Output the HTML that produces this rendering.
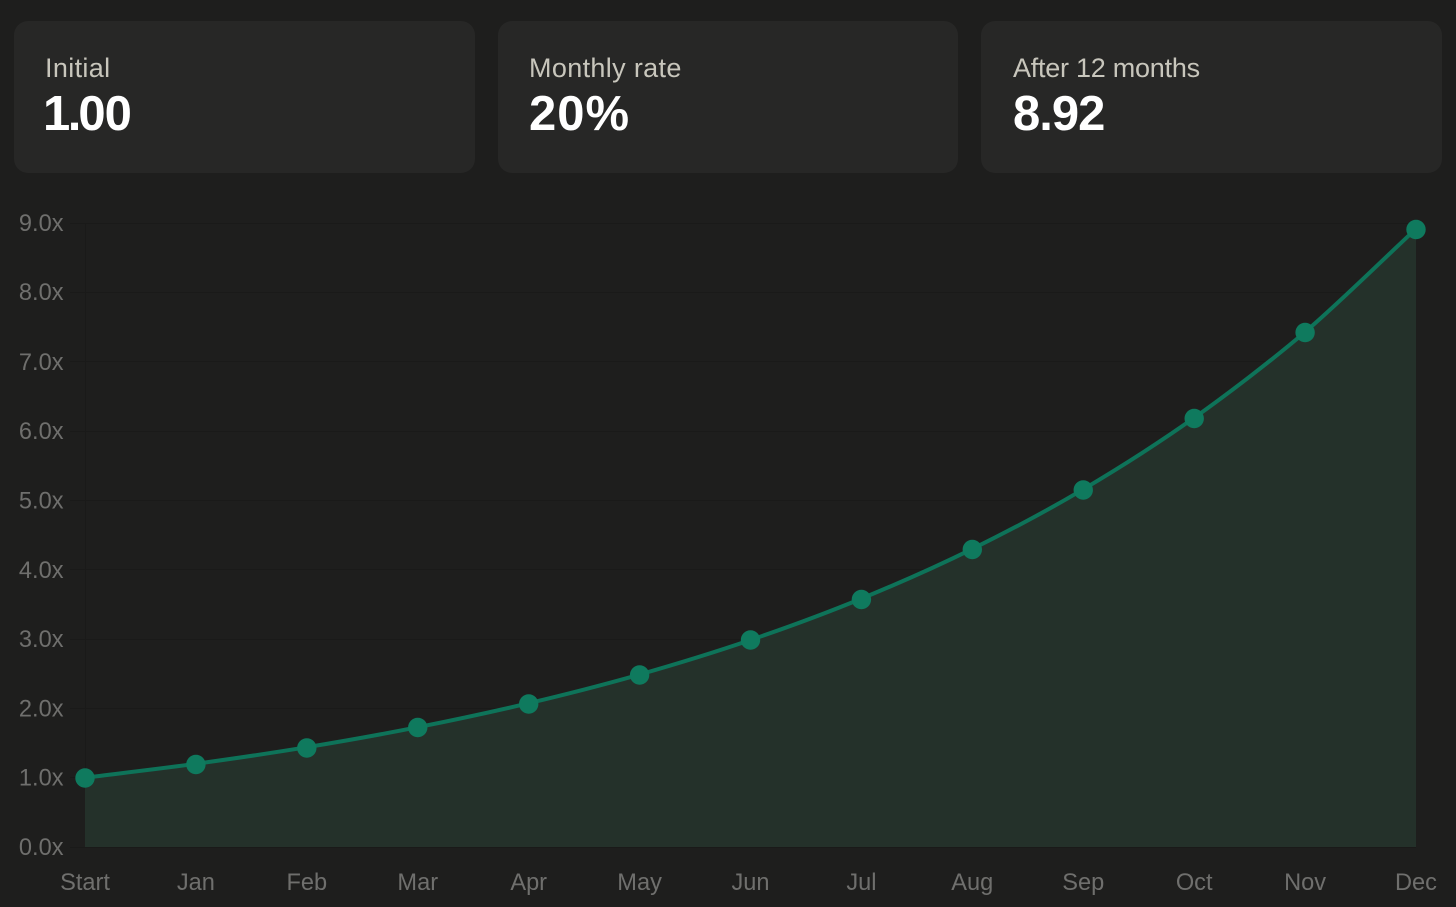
<!DOCTYPE html>
<html lang="en">
<head>
<meta charset="utf-8">
<title>Compound growth</title>
<style>
html,body{margin:0;padding:0;background:#1e1e1d;}
body{width:1456px;height:907px;position:relative;overflow:hidden;font-family:"Liberation Sans",sans-serif;}
.card{position:absolute;top:21px;height:152px;background:#272726;border-radius:14px;}
.label{position:absolute;left:31px;top:32px;font-size:27px;line-height:30px;color:#c8c6bc;white-space:nowrap;}
.value{position:absolute;left:31px;top:65px;font-size:49px;line-height:56px;font-weight:bold;color:#fff;white-space:nowrap;}
svg{position:absolute;left:0;top:0;}
svg text{font-family:"Liberation Sans",sans-serif;font-size:23.6px;fill:#6f6f6d;}
</style>
</head>
<body>
<div class="card" style="left:14px;width:461px;"><div class="label" style="letter-spacing:.35px">Initial</div><div class="value" style="left:29px"><span style="letter-spacing:-2.5px">1</span><span style="letter-spacing:-3px">.</span><span style="letter-spacing:-1px">00</span></div></div>
<div class="card" style="left:498px;width:460px;"><div class="label" style="letter-spacing:.35px">Monthly rate</div><div class="value" style="letter-spacing:1px">20%</div></div>
<div class="card" style="left:981px;width:461px;"><div class="label" style="left:32px;letter-spacing:-.25px">After 12 months</div><div class="value" style="left:32px;letter-spacing:-1px">8.92</div></div>
<svg width="1456" height="907" viewBox="0 0 1456 907" xmlns="http://www.w3.org/2000/svg">
  <g stroke="#1a1a19" stroke-width="1" fill="none" shape-rendering="crispEdges">
    <path d="M70 223.500H1416M70 292.500H1416M70 361.500H1416M70 431.500H1416M70 500.500H1416M70 569.500H1416M70 639.500H1416M70 708.500H1416M70 777.500H1416M70 847.500H1416"/>
    <path d="M85.500 223V847"/>
  </g>
  <path fill="#24312a" d="M85 777.67C118.3 773.5 162.6 768.4 195.9 763.8C229.2 759.2 273.5 752.7 306.8 747.2C340.1 741.7 384.5 733.8 417.75 727.2C451 720.6 495.4 711.1 528.7 703.2C562 695.3 606.3 684 639.6 674.5C672.9 665 717.2 651.4 750.5 640C783.8 628.6 828.1 612.3 861.4 598.6C894.7 584.9 939 565.3 972.3 548.9C1005.6 532.5 1050 509 1083.25 489.3C1116.5 469.6 1160.9 441.4 1194.2 417.8C1227.5 394.2 1271.8 360.35 1305.1 332C1338.4 303.65 1382.7 259.8 1416 228.8V847H85Z"/>
  <path fill="none" stroke="#0e7359" stroke-width="4" d="M85 777.67C118.3 773.5 162.6 768.4 195.9 763.8C229.2 759.2 273.5 752.7 306.8 747.2C340.1 741.7 384.5 733.8 417.75 727.2C451 720.6 495.4 711.1 528.7 703.2C562 695.3 606.3 684 639.6 674.5C672.9 665 717.2 651.4 750.5 640C783.8 628.6 828.1 612.3 861.4 598.6C894.7 584.9 939 565.3 972.3 548.9C1005.6 532.5 1050 509 1083.25 489.3C1116.5 469.6 1160.9 441.4 1194.2 417.8C1227.5 394.2 1271.8 360.35 1305.1 332C1338.4 303.65 1382.7 259.8 1416 228.8"/>
  <g fill="#0f7a5e">
    <circle cx="85" cy="778" r="9.700"/>
    <circle cx="195.9" cy="764.5" r="9.700"/>
    <circle cx="306.8" cy="748" r="9.700"/>
    <circle cx="417.75" cy="727.5" r="9.700"/>
    <circle cx="528.7" cy="704" r="9.700"/>
    <circle cx="639.6" cy="675" r="9.700"/>
    <circle cx="750.5" cy="640" r="9.700"/>
    <circle cx="861.4" cy="599.5" r="9.700"/>
    <circle cx="972.3" cy="549.5" r="9.700"/>
    <circle cx="1083.25" cy="490" r="9.700"/>
    <circle cx="1194.2" cy="418.5" r="9.700"/>
    <circle cx="1305.1" cy="332.5" r="9.700"/>
    <circle cx="1416" cy="229.5" r="9.700"/>
  </g>
  <g text-anchor="end">
    <text x="63.5" y="231">9.0x</text>
    <text x="63.5" y="300">8.0x</text>
    <text x="63.5" y="370">7.0x</text>
    <text x="63.5" y="439">6.0x</text>
    <text x="63.5" y="508.500">5.0x</text>
    <text x="63.5" y="578">4.0x</text>
    <text x="63.5" y="647">3.0x</text>
    <text x="63.5" y="716.500">2.0x</text>
    <text x="63.5" y="785.500">1.0x</text>
    <text x="63.5" y="855">0.0x</text>
  </g>
  <g text-anchor="middle">
    <text x="85" y="890">Start</text>
    <text x="195.900" y="890">Jan</text>
    <text x="306.800" y="890">Feb</text>
    <text x="417.750" y="890">Mar</text>
    <text x="528.700" y="890">Apr</text>
    <text x="639.600" y="890">May</text>
    <text x="750.500" y="890">Jun</text>
    <text x="861.400" y="890">Jul</text>
    <text x="972.300" y="890">Aug</text>
    <text x="1083.250" y="890">Sep</text>
    <text x="1194.200" y="890">Oct</text>
    <text x="1305.100" y="890">Nov</text>
    <text x="1416" y="890">Dec</text>
  </g>
</svg>
</body>
</html>
